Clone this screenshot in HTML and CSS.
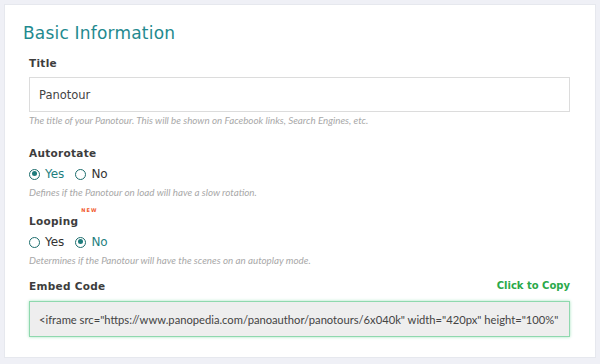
FILE: index.html
```html
<!DOCTYPE html>
<html>
<head>
<meta charset="utf-8">
<link rel="stylesheet" href="styles.css">
</head>
<body>
<div class="card">
  <h2 class="heading">Basic Information</h2>
  <div class="fields">
    <div class="field">
      <label class="label">Title</label>
      <div class="input">Panotour</div>
      <p class="help">The title of your Panotour. This will be shown on Facebook links, Search Engines, etc.</p>
    </div>
    <div class="field autorotate">
      <label class="label">Autorotate</label>
      <div class="radios">
        <span class="radio on"><span class="dot"></span>Yes</span>
        <span class="radio"><span class="dot"></span>No</span>
      </div>
      <p class="help">Defines if the Panotour on load will have a slow rotation.</p>
    </div>
    <div class="field looping">
      <label class="label">Looping<span class="new">NEW</span></label>
      <div class="radios">
        <span class="radio"><span class="dot"></span>Yes</span>
        <span class="radio on"><span class="dot"></span>No</span>
      </div>
      <p class="help">Determines if the Panotour will have the scenes on an autoplay mode.</p>
    </div>
    <div class="field embed">
      <div class="label-row">
        <label class="label">Embed Code</label>
        <span class="copy">Click to Copy</span>
      </div>
      <div class="input code"><span class="code-text">&lt;iframe src="https://www.panopedia.com/panoauthor/panotours/6x040k" width="420px" height="100%" frameborder="0"&gt;&lt;/iframe&gt;</span></div>
    </div>
  </div>
</div>
</body>
</html>
```

FILE: styles.css
```css
html, body {
  margin: 0;
  padding: 0;
}
body {
  background: #eff0f6;
  width: 600px;
  height: 364px;
  overflow: hidden;
  font-family: "DejaVu Sans", sans-serif;
}
.card {
  margin: 4px 4px 0 4px;
  height: 354px;
  box-sizing: border-box;
  background: #fff;
  border: 1px solid #e6e8ee;
  padding: 17px 25px 0 18px;
}
.heading {
  margin: 0;
  font-family: "DejaVu Sans", sans-serif;
  font-weight: normal;
  font-size: 17px;
  letter-spacing: 0.2px;
  color: #1f8a8f;
  line-height: 22px;
}
.fields {
  padding-left: 6px;
  margin-top: 12px;
}
.field {
  display: flex;
  flex-direction: column;
}
.label {
  font-family: "DejaVu Sans", sans-serif;
  font-weight: bold;
  font-size: 10.5px;
  color: #3d3d3d;
  line-height: 14px;
  letter-spacing: 0.3px;
  position: relative;
}
.new {
  position: absolute;
  top: -7px;
  margin-left: 3px;
  font-size: 5px;
  line-height: 6px;
  color: #f2592a;
  letter-spacing: 1px;
}
.input {
  margin-top: 7px;
  height: 35px;
  box-sizing: border-box;
  border: 1px solid #dcdcdc;
  padding: 0 9px;
  display: flex;
  align-items: center;
  font-family: "DejaVu Sans", sans-serif;
  font-size: 11.5px;
  color: #444;
  white-space: nowrap;
  overflow: hidden;
}
.help {
  margin: 2px 0 0 0;
  font-family: Lato, sans-serif;
  font-style: italic;
  font-size: 9.8px;
  color: #a8a8a8;
  line-height: 12px;
}
.field.autorotate {
  margin-top: 20px;
}
.field.looping {
  margin-top: 16px;
}
.field.embed {
  margin-top: 13px;
}
.radios {
  display: flex;
  gap: 11px;
  margin-top: 7px;
}
.radio {
  display: flex;
  align-items: center;
  gap: 5px;
  font-family: "DejaVu Sans", sans-serif;
  font-size: 12px;
  color: #333;
  line-height: 14px;
}
.radio.on {
  color: #1f7f7f;
}
.radios + .help {
  margin-top: 5px;
}
.dot {
  width: 11px;
  height: 11px;
  box-sizing: border-box;
  border: 1.5px solid #1d6d6d;
  border-radius: 50%;
  position: relative;
}
.radio.on .dot::after {
  content: "";
  position: absolute;
  left: 1.5px;
  top: 1.5px;
  width: 5px;
  height: 5px;
  border-radius: 50%;
  background: #1d7b7b;
}
.label-row {
  display: flex;
  justify-content: space-between;
  align-items: center;
  line-height: 14px;
}
.copy {
  font-family: "DejaVu Sans", sans-serif;
  font-weight: bold;
  font-size: 10px;
  color: #2aa94a;
}
.input.code {
  margin-top: 8px;
  background: #eeeeee;
  border: 1px solid #8fd8ae;
  box-shadow: 0 0 3px #a6e3c0;
  font-family: Lato, sans-serif;
  font-size: 11.2px;
  color: #444;
  height: 36px;
}
.code-text {
  display: block;
  min-width: 0;
  overflow: hidden;
  text-overflow: clip;
}
```
